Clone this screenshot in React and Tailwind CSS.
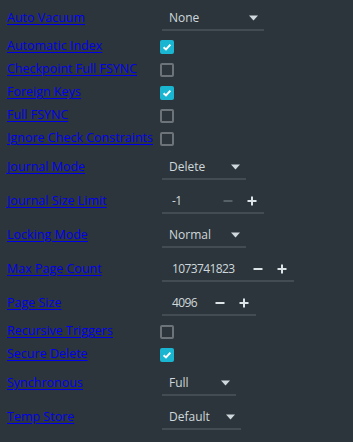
import React from "react";

const FONT = { fontFamily: '"Open Sans", "Noto Sans", sans-serif' };

const rows = [
  { label: "Auto Vacuum", kind: "select", value: "None", w: "w-[102px]" },
  { label: "Automatic Index", kind: "check", on: true },
  { label: "Checkpoint Full FSYNC", kind: "check", on: false },
  { label: "Foreign Keys", kind: "check", on: true },
  { label: "Full FSYNC", kind: "check", on: false },
  { label: "Ignore Check Constraints", kind: "check", on: false },
  { label: "Journal Mode", kind: "select", value: "Delete", w: "w-[84px]" },
  { label: "Journal Size Limit", kind: "number", value: "-1", iw: "w-[54px]", minusOff: true },
  { label: "Locking Mode", kind: "select", value: "Normal", w: "w-[84px]" },
  { label: "Max Page Count", kind: "number", value: "1073741823", iw: "w-[84px]" },
  { label: "Page Size", kind: "number", value: "4096", iw: "w-[46px]" },
  { label: "Recursive Triggers", kind: "check", on: false },
  { label: "Secure Delete", kind: "check", on: true },
  { label: "Synchronous", kind: "select", value: "Full", w: "w-[74px]" },
  { label: "Temp Store", kind: "select", value: "Default", w: "w-[79px]" },
];

function Check({ on }) {
  if (on) {
    return (
      <span className="ml-[-2px] w-[14px] h-[14px] rounded-[2px] bg-[#19b5d1] grid place-items-center">
        <svg width="10" height="10" viewBox="0 0 10 10">
          <path d="M1.6 5.2 L4 7.4 L8.4 2.6" fill="none" stroke="#ffffff" strokeWidth="2" />
        </svg>
      </span>
    );
  }
  return <span className="ml-[-2px] w-[14px] h-[14px] rounded-[2px] border-2 border-[#6c7479]" />;
}

function Select({ value, w }) {
  return (
    <div className={`${w} h-[30px] border-b-2 border-[#434c52] flex items-start pt-[6px] pl-[7px] pr-[6px] justify-between`}>
      <span className="leading-[22px] text-[12px] text-[#cfd8dc]">{value}</span>
      <svg width="9" height="22" viewBox="0 0 9 22">
        <path d="M0 8.5 L9 8.5 L4.5 13.5 Z" fill="#cfd8dc" />
      </svg>
    </div>
  );
}

function Sign({ plus, dim }) {
  const c = dim ? "#556067" : "#dde4e7";
  return (
    <span className="w-[24px] h-[22px] grid place-items-center">
      <svg width="10" height="10" viewBox="0 0 10 10">
        <path d="M0.5 5 H9.5" stroke={c} strokeWidth="2" />
        {plus && <path d="M5 0.5 V9.5" stroke={c} strokeWidth="2" />}
      </svg>
    </span>
  );
}

function NumberBox({ value, iw, minusOff }) {
  return (
    <div className="h-[30px] border-b-2 border-[#434c52] flex items-start pt-[6px]">
      <span className={`${iw} pl-[10px] leading-[22px] text-[12px] tracking-[-0.6px] text-[#cfd8dc]`}>{value}</span>
      <Sign dim={minusOff} />
      <Sign plus />
    </div>
  );
}

export default function App() {
  return (
    <div className="w-[353px] h-[442px] bg-[#2c353b] pt-[1px] overflow-hidden" style={FONT}>
      {rows.map((r) => {
        const tall = r.kind !== "check";
        return (
          <div key={r.label} className={`flex ${tall ? "h-[34px] items-start" : "h-[23px] items-center"}`}>
            <div className={`w-[162px] pl-[7px] flex items-center ${tall ? "h-[34px]" : ""}`}>
              <a className="text-[12.5px] text-[#0000ee] underline underline-offset-[2px] whitespace-nowrap cursor-pointer">
                {r.label}
              </a>
            </div>
            {r.kind === "check" && <Check on={r.on} />}
            {r.kind === "select" && <Select value={r.value} w={r.w} />}
            {r.kind === "number" && <NumberBox value={r.value} iw={r.iw} minusOff={r.minusOff} />}
          </div>
        );
      })}
    </div>
  );
}
